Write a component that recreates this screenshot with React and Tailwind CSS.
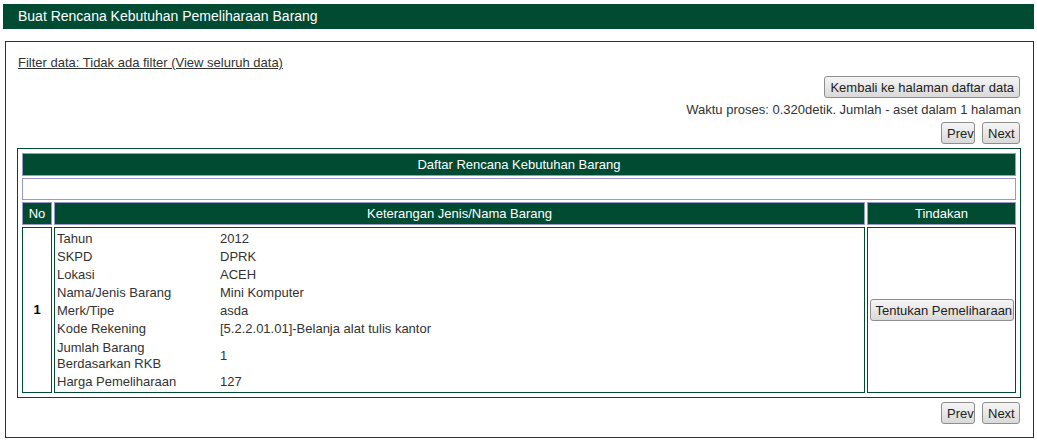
import React from 'react';

const GREEN = 'bg-[#024b33]';

function Btn({ children, className = '' }) {
  return (
    <button
      className={`h-[22px] px-[5px] rounded-[3px] border border-[#8e8e8e] bg-gradient-to-b from-[#f6f6f6] to-[#d9d9d9] text-[13px] leading-[15px] text-[#222] whitespace-nowrap ${className}`}
    >
      {children}
    </button>
  );
}

function Pager() {
  return (
    <div className="flex justify-end gap-[7px] pr-[2px]">
      <Btn className="w-[34px] px-0">Prev</Btn>
      <Btn className="w-[38px] px-0">Next</Btn>
    </div>
  );
}

const rows = [
  ['Tahun', '2012'],
  ['SKPD', 'DPRK'],
  ['Lokasi', 'ACEH'],
  ['Nama/Jenis Barang', 'Mini Komputer'],
  ['Merk/Tipe', 'asda'],
  ['Kode Rekening', '[5.2.2.01.01]-Belanja alat tulis kantor'],
];

export default function App() {
  return (
    <div className="w-[1037px] h-[443px] bg-white text-[#333] text-[13px] font-['Liberation_Sans',Arial,sans-serif]">
      <div className="pt-1 px-[3px]">
        <div className={`h-[25px] ${GREEN} text-white text-[14px] pl-[15px] flex items-center`}>
          Buat Rencana Kebutuhan Pemeliharaan Barang
        </div>
      </div>

      <div className="ml-[5px] mt-3 w-[1029px] h-[397px] border border-[#024b33] px-[11px] pt-[13px]">
        <div className="pl-[1px] leading-[15px]">
          <a href="#" className="underline text-[#333]">Filter data: Tidak ada filter (View seluruh data)</a>
        </div>

        <div className="flex justify-end mt-[6px] pr-[2px]">
          <Btn className="h-[21px] px-[5px]">Kembali ke halaman daftar data</Btn>
        </div>

        <div className="text-right mt-1 leading-[15px] pr-[1px]">
          Waktu proses: 0.320detik. Jumlah - aset dalam 1 halaman
        </div>

        <div className="mt-[5px]">
          <Pager />
        </div>

        <table className="mt-[4px] w-[1004px] border border-[#024b33] border-separate border-spacing-[2px] p-[2px] table-fixed">
          <colgroup>
            <col className="w-[30px]" />
            <col className="w-[811px]" />
            <col className="w-[149px]" />
          </colgroup>
          <tbody>
            <tr>
              <td colSpan={3} className={`h-[23px] ${GREEN} border border-[#9999cc] text-white text-center p-0`}>
                Daftar Rencana Kebutuhan Barang
              </td>
            </tr>
            <tr>
              <td colSpan={3} className="h-[22px] border border-[#9999cc] p-0"></td>
            </tr>
            <tr>
              <td className={`h-[23px] ${GREEN} border border-[#9999cc] text-white text-center p-0`}>No</td>
              <td className={`${GREEN} border border-[#9999cc] text-white text-center p-0`}>Keterangan Jenis/Nama Barang</td>
              <td className={`${GREEN} border border-[#9999cc] text-white text-center p-0`}>Tindakan</td>
            </tr>
            <tr>
              <td className="h-[166px] border border-[#024b33] text-center align-middle font-bold text-black p-0">1</td>
              <td className="border border-[#024b33] align-top pt-[2px] px-0 pb-0">
                <table className="border-collapse w-full table-fixed">
                  <colgroup>
                    <col className="w-[163px]" />
                    <col />
                  </colgroup>
                  <tbody>
                    {rows.map(([k, v]) => (
                      <tr key={k}>
                        <td className="pl-[2px] py-[1px] leading-[16px]">{k}</td>
                        <td className="pl-[2px] py-[1px] leading-[16px]">{v}</td>
                      </tr>
                    ))}
                    <tr>
                      <td className="pl-[2px] pt-[2px] pb-[1px] leading-[16px]">
                        Jumlah Barang
                        <br />
                        Berdasarkan RKB
                      </td>
                      <td className="pl-[2px] py-[1px] leading-[16px] align-middle">1</td>
                    </tr>
                    <tr>
                      <td className="pl-[2px] py-[1px] leading-[16px]">Harga Pemeliharaan</td>
                      <td className="pl-[2px] py-[1px] leading-[16px]">127</td>
                    </tr>
                  </tbody>
                </table>
              </td>
              <td className="border border-[#024b33] text-center align-middle p-0">
                <Btn className="h-[21px] px-[1px] w-[144px]">Tentukan Pemeliharaan</Btn>
              </td>
            </tr>
          </tbody>
        </table>

        <div className="mt-1">
          <Pager />
        </div>
      </div>
    </div>
  );
}
